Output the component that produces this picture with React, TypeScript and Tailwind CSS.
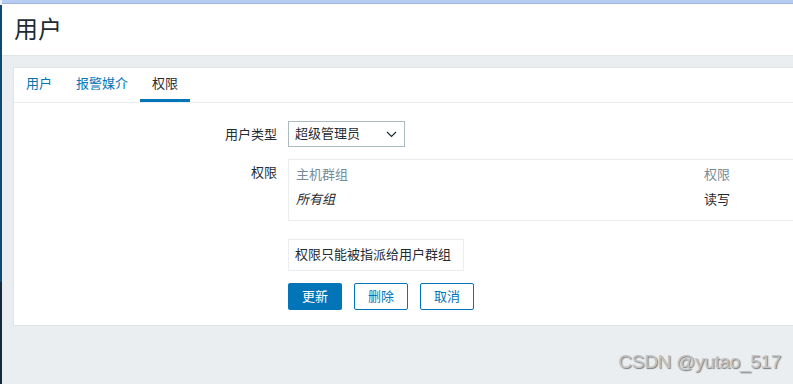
const font = { fontFamily: '"Liberation Sans", Arial, "Noto Sans CJK SC", sans-serif' }

function Tab({ label, active }: { label: string; active?: boolean }) {
  return (
    <div
      className={
        'flex h-[34px] items-center border-b-[3px] px-3 text-[13px] ' +
        (active ? 'border-[#0275b8] text-[#1f2c33]' : 'border-transparent text-[#0275b8]')
      }
    >
      {label}
    </div>
  )
}

function Row({ label, children }: { label: string; children: React.ReactNode }) {
  return (
    <div className="flex items-start">
      <div className="w-[274px] shrink-0 pr-[11px] pt-[4px] text-right text-[13px] text-[#1f2c33]">{label}</div>
      <div>{children}</div>
    </div>
  )
}

export default function App() {
  return (
    <div className="flex h-[384px] w-[793px] overflow-hidden bg-[#ebeef0]" style={font}>
      <div className="flex w-[2px] shrink-0 flex-col pt-[5px]">
        <div className="h-[277px] bg-[#0e4a6e]" />
        <div className="flex-1 bg-[#152a3c]" />
      </div>
      <div className="flex min-w-0 flex-1 flex-col">
        <div className="h-[4px] border-b border-[#9fb4d8] bg-[#b5cdf5]" />
        <div className="flex h-[52px] items-center border-b border-[#dfe4e7] bg-white pl-[12px]">
          <h1 className="text-[24px] leading-none text-[#1f2c33]">用户</h1>
        </div>
        <div className="pl-[11px] pt-[11px]">
          <div className="h-[259px] w-[820px] border border-[#dfe4e7] bg-white">
            <div className="flex border-b border-[#ebeef0]">
              <Tab label="用户" />
              <Tab label="报警媒介" />
              <Tab label="权限" active />
            </div>
            <div className="flex flex-col gap-[12px] pt-[18px]">
              <Row label="用户类型">
                <div className="flex h-[26px] w-[117px] items-center justify-between border border-[#acbbc2] pl-[6px] pr-[7px] text-[13px] text-[#1f2c33]">
                  <span>超级管理员</span>
                  <svg width="11" height="7" viewBox="0 0 11 7" fill="none" stroke="#1f2c33" strokeWidth="1.2">
                    <path d="M1 1l4.5 4.5L10 1" />
                  </svg>
                </div>
              </Row>
              <Row label="权限">
                <div className="h-[62px] w-[540px] border border-[#ebeef0] px-[7px] pt-[5px] text-[13px]">
                  <div className="flex text-[#768d99]">
                    <span className="w-[408px]">主机群组</span>
                    <span>权限</span>
                  </div>
                  <div className="mt-[5px] flex text-[#1f2c33]">
                    <span className="w-[408px] italic">所有组</span>
                    <span>读写</span>
                  </div>
                </div>
              </Row>
              <Row label="">
                <div className="mt-[6px] flex h-[32px] w-[176px] items-center border border-[#ebeef0] px-[6px] text-[13px] text-[#1f2c33]">
                  权限只能被指派给用户群组
                </div>
              </Row>
              <Row label="">
                <div className="flex gap-[12px]">
                  <button className="h-[27px] w-[54px] rounded-[2px] bg-[#0275b8] text-[13px] text-white">更新</button>
                  <button className="h-[27px] w-[54px] rounded-[2px] border border-[#0275b8] bg-white text-[13px] text-[#0275b8]">删除</button>
                  <button className="h-[27px] w-[54px] rounded-[2px] border border-[#0275b8] bg-white text-[13px] text-[#0275b8]">取消</button>
                </div>
              </Row>
            </div>
          </div>
        </div>
        <div className="flex flex-1 items-center justify-end pr-[12px] pt-[14px]">
          <span className="text-[19px] tracking-[-0.3px] text-[#c4c4c4] [text-shadow:1px_1px_1px_#7a7a7a]">CSDN @yutao_517</span>
        </div>
      </div>
    </div>
  )
}
